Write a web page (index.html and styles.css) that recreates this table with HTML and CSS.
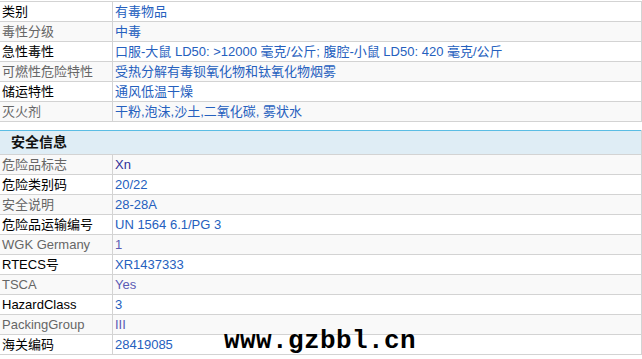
FILE: index.html
```html
<!DOCTYPE html>
<html lang="zh-CN">
<head>
<meta charset="utf-8">
<title>安全信息</title>
<link rel="stylesheet" href="styles.css">
</head>
<body>
<div class="page">
  <table class="grid">
    <colgroup><col class="ck"><col class="cv"></colgroup>
    <tr><td class="k">类别</td><td class="v">有毒物品</td></tr>
    <tr class="alt"><td class="k">毒性分级</td><td class="v">中毒</td></tr>
    <tr><td class="k">急性毒性</td><td class="v">口服-大鼠 LD50: &gt;12000 毫克/公斤; 腹腔-小鼠 LD50: 420 毫克/公斤</td></tr>
    <tr class="alt"><td class="k">可燃性危险特性</td><td class="v">受热分解有毒钡氧化物和钛氧化物烟雾</td></tr>
    <tr><td class="k">储运特性</td><td class="v">通风低温干燥</td></tr>
    <tr class="alt"><td class="k">灭火剂</td><td class="v">干粉,泡沫,沙土,二氧化碳, 雾状水</td></tr>
  </table>

  <table class="grid safety">
    <colgroup><col class="ck"><col class="cv"></colgroup>
    <tr class="head"><th colspan="2">安全信息</th></tr>
    <tr class="alt"><td class="k">危险品标志</td><td class="v navy">Xn</td></tr>
    <tr><td class="k">危险类别码</td><td class="v">20/22</td></tr>
    <tr class="alt"><td class="k">安全说明</td><td class="v">28-28A</td></tr>
    <tr><td class="k">危险品运输编号</td><td class="v">UN 1564 6.1/PG 3</td></tr>
    <tr class="alt"><td class="k">WGK Germany</td><td class="v purple">1</td></tr>
    <tr><td class="k">RTECS号</td><td class="v">XR1437333</td></tr>
    <tr class="alt"><td class="k">TSCA</td><td class="v purple">Yes</td></tr>
    <tr><td class="k">HazardClass</td><td class="v">3</td></tr>
    <tr class="alt"><td class="k">PackingGroup</td><td class="v purple">III</td></tr>
    <tr><td class="k">海关编码</td><td class="v">28419085</td></tr>
  </table>

  <div class="watermark">www.gzbbl.cn</div>
</div>
</body>
</html>
```

FILE: styles.css
```css
html, body {
  margin: 0;
  padding: 0;
  background: #ffffff;
}

body {
  font-family: "Liberation Sans", Arial, "Noto Sans CJK SC", sans-serif;
  font-size: 13px;
  color: #000000;
}

.page {
  position: relative;
  padding-top: 1px;
  width: 642px;
  height: 359px;
  overflow: hidden;
}

.grid {
  border-collapse: collapse;
  width: 643px;
  margin-left: -1px;
  table-layout: fixed;
}

.grid col.ck {
  width: 113px;
}

.grid td {
  border: 1px solid #d3d3d3;
  height: 19px;
  padding: 0 1px 0 2px;
  line-height: 19px;
  white-space: nowrap;
  overflow: hidden;
}

.grid .k {
  color: #000000;
}

.grid .v {
  color: #2560be;
}

.grid tr.alt td {
  background: #f9f9f9;
}

.grid tr.alt .k {
  color: #666666;
}

.grid .v.navy {
  color: #30309a;
}

.grid .v.purple {
  color: #5b5bb5;
}

.safety {
  margin-top: 8px;
}

.safety .head th {
  background: #dfedf5;
  border-top: 1px solid #5bbde4;
  border-left: 1px solid #d3d3d3;
  border-right: 1px solid #d3d3d3;
  border-bottom: 1px solid #d3d3d3;
  height: 23px;
  padding: 0 0 0 11px;
  text-align: left;
  font-size: 14px;
  font-weight: bold;
  color: #111111;
  line-height: 23px;
}

.watermark {
  position: absolute;
  left: 224px;
  top: 326px;
  font-family: "Liberation Mono", "Courier New", monospace;
  font-size: 26px;
  font-weight: bold;
  color: #000000;
  line-height: 30px;
  letter-spacing: 0.4px;
}
```
